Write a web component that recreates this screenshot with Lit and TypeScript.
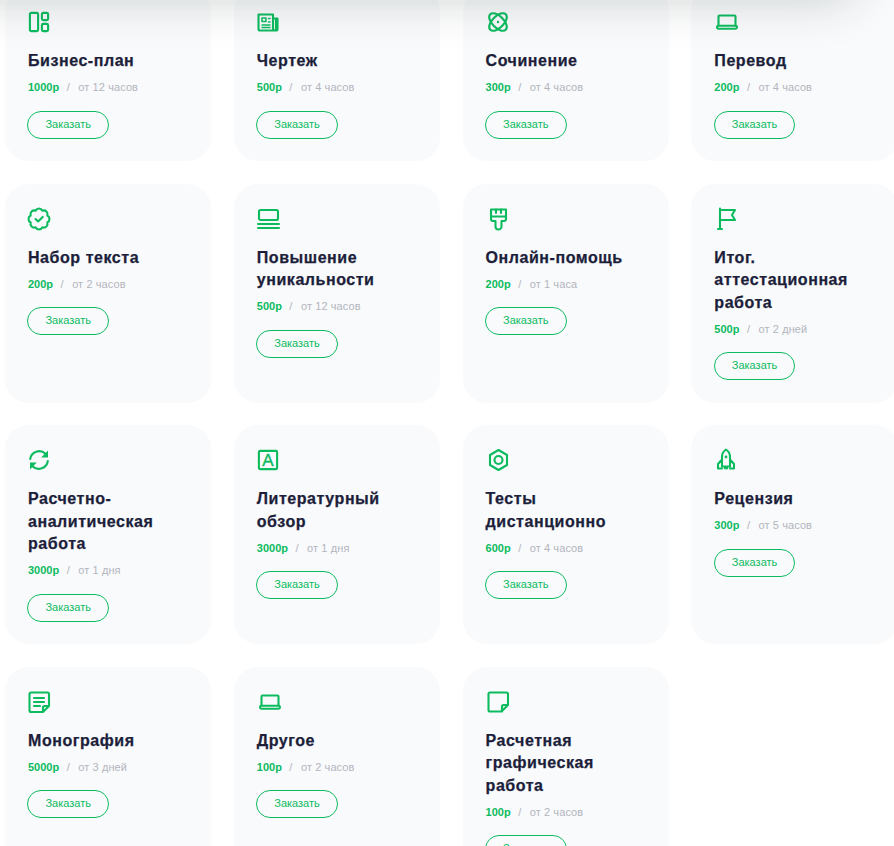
import { LitElement, html, css, svg } from "lit";
import { customElement } from "lit/decorators.js";

function badgeClosed() {
  const n = 8, cx = 11, cy = 12, r = 9;
  const pts: string[] = [];
  for (let i = 0; i < n; i++) {
    const a = (i / n) * Math.PI * 2 - Math.PI / 2 + Math.PI / 8;
    pts.push(`${(cx + r * Math.cos(a)).toFixed(2)} ${(cy + r * Math.sin(a)).toFixed(2)}`);
  }
  return `M${pts[0]}` + pts.slice(1).map((p) => `A3.8 3.8 0 0 1 ${p}`).join("") + `A3.8 3.8 0 0 1 ${pts[0]}Z`;
}

const icons: Record<string, unknown> = {
  layout: svg`<rect x="1.9" y="2.9" width="8.2" height="18.2" rx="1.4"/><rect x="13.9" y="2.9" width="6.2" height="7.2" rx="1.4"/><rect x="13.9" y="13.9" width="6.2" height="7.2" rx="1.4"/>`,
  news: svg`<path d="M18.5 20.5H3a1.5 1.5 0 0 1-1.5-1.5V4.5H16V19a1.5 1.5 0 0 0 3 0V8.5h-3M19 20.5a1.5 1.5 0 0 0 1.5-1.5V8.5H16"/><path d="M5 8h4v3.5H5zM11.5 8.5H13M11.5 12H13M5 15h8M5 17.5h8" stroke-width="1.5"/>`,
  atom: svg`<ellipse cx="12" cy="12" rx="11" ry="5.8" transform="rotate(45 12 12)"/><ellipse cx="12" cy="12" rx="11" ry="5.8" transform="rotate(-45 12 12)"/><circle cx="12" cy="12" r="1.2" class="fill"/>`,
  laptop: svg`<path d="M4.5 15.5V6.5a1 1 0 0 1 1-1h15a1 1 0 0 1 1 1v9"/><rect x="3" y="15.8" width="20" height="2.9" rx="1.4"/>`,
  badge: svg`<path d=${badgeClosed()}/><path d="M7.5 12l2.6 2.5 4.6-4.6"/>`,
  screen: svg`<rect x="2" y="3" width="19" height="10" rx="1.5"/><path d="M1 17h21M1 21h21"/>`,
  brush: svg`<path d="M5 2.5H20V12a2 2 0 0 1-2 2h-2.5v5.5a3 3 0 0 1-6 0V14H7a2 2 0 0 1-2-2z"/><path d="M5 9.5H20M10 2.5v3.5M15 2.5v3.5"/>`,
  flag: svg`<path d="M6 1.5V22M4 22H8M6 3H21L18 8 21 13H6"/>`,
  sync: svg`<path d="M2.2 11A9 9 0 0 1 17.5 5.8M19.8 13A9 9 0 0 1 4.5 18.2"/><path d="M20 2.5V9.5H13.2zM2 21.5V14.5H8.8z" class="fill"/>`,
  a: svg`<rect x="1.9" y="2.9" width="18.2" height="18.2" rx="1"/><text x="11" y="18" text-anchor="middle" class="glyph">A</text>`,
  hex: svg`<path d="M12.5 2L21 7V17L12.5 22 4 17V7z"/><circle cx="12.5" cy="12" r="4"/>`,
  rocket: svg`<path d="M12 1.5C9 3.5 8 6.5 8 9V18.5H16V9C16 6.5 15 3.5 12 1.5zM8 11.5L4 16V20.5H8M16 11.5L20 16V20.5H16M11 18.5V20.5M13 18.5V20.5"/><circle cx="12" cy="9" r="1.4" class="fill"/>`,
  doc: svg`<path d="M3 2.5H19.5a1.5 1.5 0 0 1 1.5 1.5V16L15 22H3a1.5 1.5 0 0 1-1.5-1.5V4A1.5 1.5 0 0 1 3 2.5zM21 16H16.5a1.5 1.5 0 0 0-1.5 1.5V22"/><path d="M6 8H16M6 12H16M6 16H12"/>`,
  note: svg`<path d="M4 2.5H20.5a1.5 1.5 0 0 1 1.5 1.5V15L15.5 21.5H4A1.5 1.5 0 0 1 2.5 20V4A1.5 1.5 0 0 1 4 2.5zM22 15H17.5a1.5 1.5 0 0 0-1.5 1.5V21.5"/>`,
};

const items: [string, string, string, string][] = [
  ["layout", "Бизнес-план", "1000р", "от 12 часов"],
  ["news", "Чертеж", "500р", "от 4 часов"],
  ["atom", "Сочинение", "300р", "от 4 часов"],
  ["laptop", "Перевод", "200р", "от 4 часов"],
  ["badge", "Набор текста", "200р", "от 2 часов"],
  ["screen", "Повышение уникальности", "500р", "от 12 часов"],
  ["brush", "Онлайн-помощь", "200р", "от 1 часа"],
  ["flag", "Итог. аттестационная работа", "500р", "от 2 дней"],
  ["sync", "Расчетно-аналитическая работа", "3000р", "от 1 дня"],
  ["a", "Литературный обзор", "3000р", "от 1 дня"],
  ["hex", "Тесты дистанционно", "600р", "от 4 часов"],
  ["rocket", "Рецензия", "300р", "от 5 часов"],
  ["doc", "Монография", "5000р", "от 3 дней"],
  ["laptop", "Другое", "100р", "от 2 часов"],
  ["note", "Расчетная графическая работа", "100р", "от 2 часов"],
];

@customElement("app-root")
export class AppRoot extends LitElement {
  static styles = css`
    :host {
      display: block;
      position: relative;
      width: 894px;
      height: 846px;
      overflow: hidden;
      background: #fff;
      font-family: "Liberation Sans", Arial, sans-serif;
    }
    .grid {
      display: grid;
      grid-template-columns: repeat(4, 206.2px);
      column-gap: 22.6px;
      row-gap: 22.5px;
      margin: -13px 0 0 5px;
      width: 930px;
    }
    .card {
      background: #f9fafc;
      border-radius: 24px;
      padding: 23px 23px 22.5px;
      box-sizing: border-box;
      display: flex;
      flex-direction: column;
      align-items: flex-start;
    }
    .ico {
      display: block;
      width: 24px;
      height: 24px;
      fill: none;
      stroke: #0dbb5f;
      stroke-width: 2.1;
      stroke-linejoin: round;
      stroke-linecap: round;
      overflow: visible;
    }
    .ico .fill {
      fill: #0dbb5f;
      stroke: none;
    }
    .ico .glyph {
      fill: #0dbb5f;
      stroke: #0dbb5f;
      stroke-width: 0.4;
      font: 400 17px "Liberation Sans", Arial, sans-serif;
    }
    h3 {
      margin: 16px 0 0;
      font-size: 16px;
      line-height: 22.5px;
      font-weight: 700;
      letter-spacing: 0.55px;
      -webkit-text-stroke: 0.25px #1c1e3a;
      color: #1c1e3a;
    }
    .meta {
      margin-top: 6.5px;
      display: flex;
      gap: 7.5px;
      font-size: 11px;
      line-height: 16px;
      color: #b3b5bd;
    }
    .price {
      color: #0dbb5f;
      font-weight: 700;
    }
    .time {
      margin-left: 1px;
      letter-spacing: 0.1px;
    }
    .btn {
      margin: 15.5px 0 0 -0.6px;
      box-sizing: border-box;
      width: 81.6px;
      height: 28px;
      padding-bottom: 2px;
      border: 1px solid #0dbb5f;
      border-radius: 14px;
      display: flex;
      align-items: center;
      justify-content: center;
      font-size: 11px;
      color: #0dbb5f;
      background: transparent;
    }
    .shade {
      position: absolute;
      top: -62px;
      left: -80px;
      width: 940px;
      height: 60px;
      border-radius: 40px;
      box-shadow: 0 0 50px rgba(20, 40, 30, 0.22);
    }
  `;

  render() {
    return html`
      <div class="grid">
        ${items.map(
          ([ic, title, price, time]) => html`
            <div class="card">
              <svg class="ico" viewBox="0 0 24 24">${icons[ic]}</svg>
              <h3>${title}</h3>
              <div class="meta"><span class="price">${price}</span><span>/</span><span class="time">${time}</span></div>
              <div class="btn">Заказать</div>
            </div>
          `
        )}
      </div>
      <div class="shade"></div>
    `;
  }
}
